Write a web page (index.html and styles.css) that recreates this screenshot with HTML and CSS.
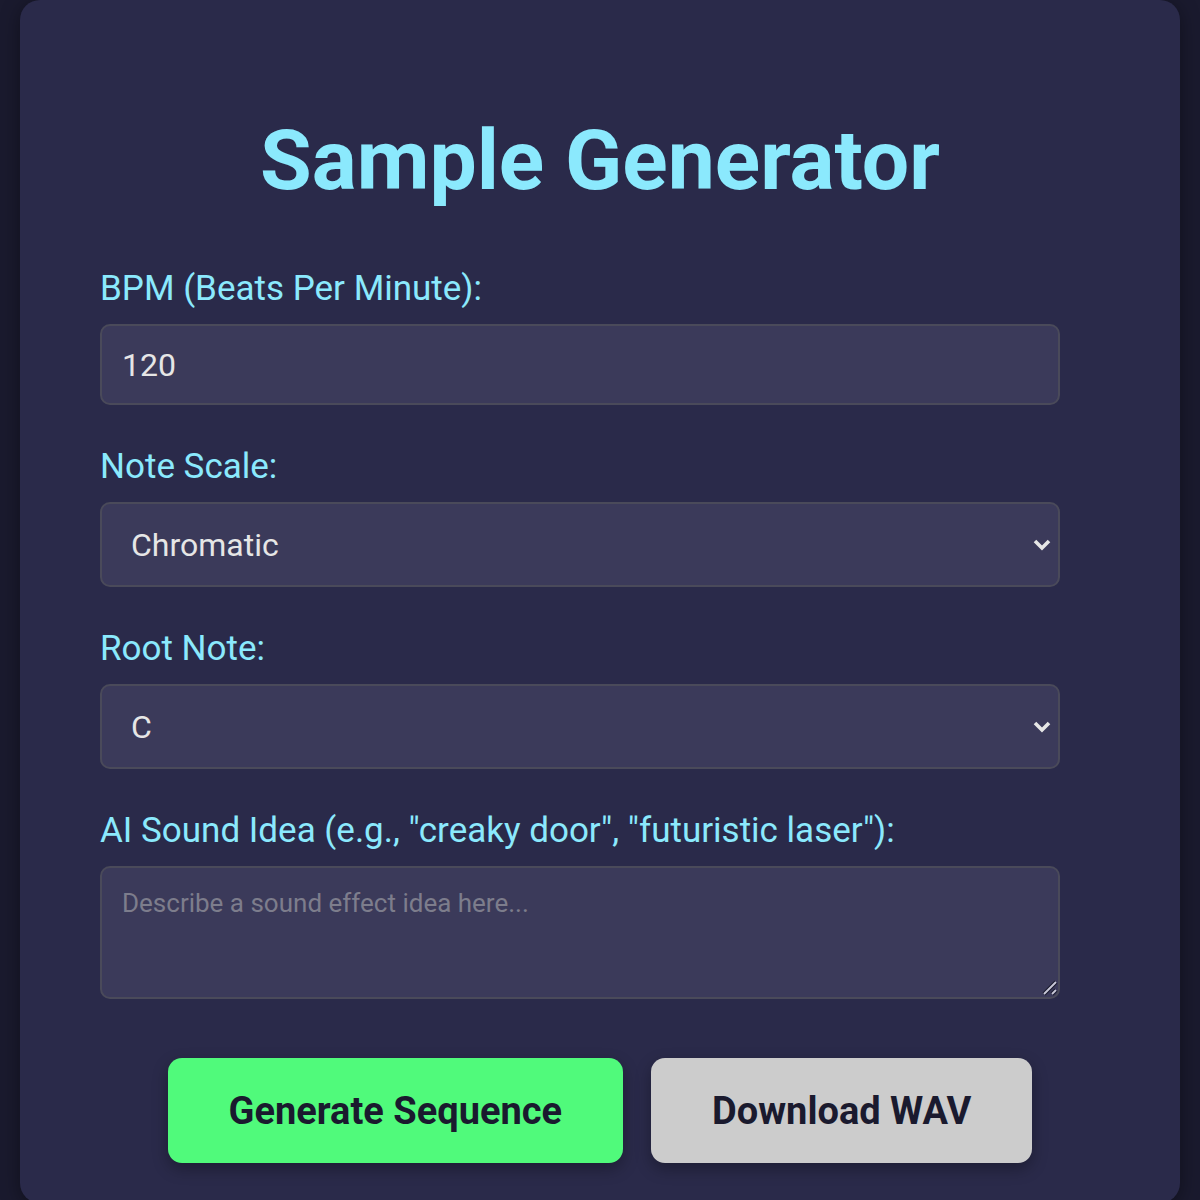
FILE: index.html
```html
<!DOCTYPE html>
<html lang="en">
<head>
    <meta charset="UTF-8">
    <meta name="viewport" content="width=device-width, initial-scale=1.0">
    <title>Sample Generator</title>
    <link rel="stylesheet" href="styles.css">
</head>
<body>
    <div class="container">
        <h1>Sample Generator</h1>

        <div class="form-group">
            <label for="bpm">BPM (Beats Per Minute):</label>
            <input type="number" id="bpm" value="120">
        </div>

        <div class="form-group">
            <label for="scale">Note Scale:</label>
            <div class="select-wrap">
                <select id="scale">
                    <option>Chromatic</option>
                    <option>Major</option>
                    <option>Minor</option>
                    <option>Pentatonic</option>
                </select>
                <svg class="chevron" width="20" height="14" viewBox="0 0 20 14"><path d="M3 3l7 7 7-7" fill="none" stroke="#e6e6e6" stroke-width="3.6"/></svg>
            </div>
        </div>

        <div class="form-group">
            <label for="root">Root Note:</label>
            <div class="select-wrap">
                <select id="root">
                    <option>C</option>
                    <option>C#</option>
                    <option>D</option>
                    <option>E</option>
                    <option>F</option>
                    <option>G</option>
                    <option>A</option>
                    <option>B</option>
                </select>
                <svg class="chevron" width="20" height="14" viewBox="0 0 20 14"><path d="M3 3l7 7 7-7" fill="none" stroke="#e6e6e6" stroke-width="3.6"/></svg>
            </div>
        </div>

        <div class="form-group">
            <label for="idea">AI Sound Idea (e.g., "creaky door", "futuristic laser"):</label>
            <div class="textarea-wrap">
                <textarea id="idea" placeholder="Describe a sound effect idea here..."></textarea>
                <svg class="grip" width="16" height="16" viewBox="0 0 16 16"><path d="M2 14L14 2M10 14l4-4" stroke="#1a1a2e" stroke-width="4"/><path d="M2 14L14 2M10 14l4-4" stroke="#c8c8d8" stroke-width="1.8"/></svg>
            </div>
        </div>

        <div class="buttons">
            <button class="btn btn-generate">Generate Sequence</button>
            <button class="btn btn-download">Download WAV</button>
        </div>
    </div>
</body>
</html>
```

FILE: styles.css
```css
body {
    font-family: Roboto, "Noto Sans", Arial, sans-serif;
    margin: 0;
    padding: 0 20px 20px;
    background-color: #1a1a2e;
    color: #8be9fd;
}
.container {
    background: #2a2a4a;
    border-radius: 20px;
    padding: 112px 80px 40px;
    box-shadow: 0 4px 20px rgba(0, 0, 0, 0.4);
}
h1 {
    margin: 0 0 55px;
    font-size: 84px;
    line-height: 98px;
    text-align: center;
    color: #8be9fd;
}
.form-group {
    margin-bottom: 38px;
    width: 960px;
}
label {
    display: block;
    font-size: 35px;
    line-height: 42px;
    padding-top: 3px;
    margin-bottom: 14px;
    color: #8be9fd;
}
input,
select,
textarea {
    display: block;
    width: 100%;
    box-sizing: border-box;
    padding: 0 20px;
    background: #3b3a5a;
    color: #e6e6e6;
    border: 2px solid #4a4a5a;
    border-radius: 10px;
    font-family: inherit;
    font-size: 32px;
}
input {
    height: 81px;
}
.select-wrap,
.textarea-wrap {
    position: relative;
}
select {
    height: 85px;
    padding-left: 29px;
    appearance: none;
}
.chevron {
    position: absolute;
    right: 8px;
    top: 36px;
    pointer-events: none;
}
textarea {
    height: 133px;
    padding: 20px;
    font-size: 26px;
    resize: none;
}
textarea::placeholder {
    color: #7d7d8c;
}
.grip {
    position: absolute;
    right: 2px;
    bottom: 3px;
    pointer-events: none;
}
.buttons {
    display: flex;
    justify-content: center;
    gap: 28px;
    margin-top: 59px;
}
.btn {
    height: 105px;
    padding: 0 61px;
    border: none;
    border-radius: 14px;
    font-family: inherit;
    font-size: 38px;
    font-weight: bold;
    color: #1a1a2e;
    cursor: pointer;
    box-shadow: 0 6px 16px rgba(0, 0, 0, 0.3);
}
.btn-generate {
    background: #50fa7b;
}
.btn-download {
    background: #cccccc;
}
```
